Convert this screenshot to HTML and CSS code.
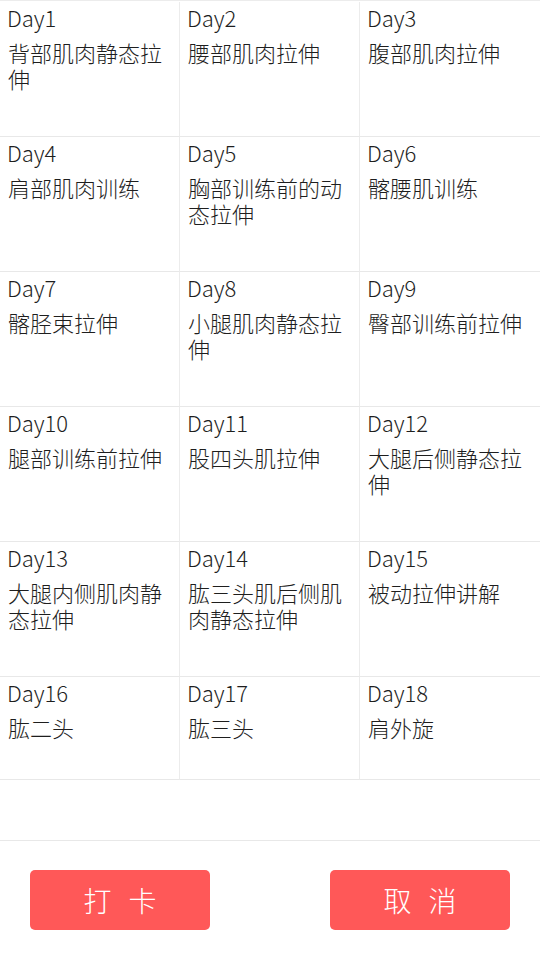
FILE: index.html
```html
<!DOCTYPE html>
<html lang="zh-CN">
<head>
<meta charset="utf-8">
<title>拉伸计划</title>
<link rel="stylesheet" href="styles.css">
</head>
<body>
<div class="grid">
  <div class="cell"><div class="day">Day1</div><div class="name">背部肌肉静态拉伸</div></div>
  <div class="cell"><div class="day">Day2</div><div class="name">腰部肌肉拉伸</div></div>
  <div class="cell"><div class="day">Day3</div><div class="name">腹部肌肉拉伸</div></div>
  <div class="cell"><div class="day">Day4</div><div class="name">肩部肌肉训练</div></div>
  <div class="cell"><div class="day">Day5</div><div class="name">胸部训练前的动态拉伸</div></div>
  <div class="cell"><div class="day">Day6</div><div class="name">髂腰肌训练</div></div>
  <div class="cell"><div class="day">Day7</div><div class="name">髂胫束拉伸</div></div>
  <div class="cell"><div class="day">Day8</div><div class="name">小腿肌肉静态拉伸</div></div>
  <div class="cell"><div class="day">Day9</div><div class="name">臀部训练前拉伸</div></div>
  <div class="cell"><div class="day">Day10</div><div class="name">腿部训练前拉伸</div></div>
  <div class="cell"><div class="day">Day11</div><div class="name">股四头肌拉伸</div></div>
  <div class="cell"><div class="day">Day12</div><div class="name">大腿后侧静态拉伸</div></div>
  <div class="cell"><div class="day">Day13</div><div class="name">大腿内侧肌肉静态拉伸</div></div>
  <div class="cell"><div class="day">Day14</div><div class="name">肱三头肌后侧肌肉静态拉伸</div></div>
  <div class="cell"><div class="day">Day15</div><div class="name">被动拉伸讲解</div></div>
  <div class="cell"><div class="day">Day16</div><div class="name">肱二头</div></div>
  <div class="cell"><div class="day">Day17</div><div class="name">肱三头</div></div>
  <div class="cell"><div class="day">Day18</div><div class="name">肩外旋</div></div>
</div>
<div class="spacer"></div>
<div class="footer">
  <button class="btn"><span>打</span><span>卡</span></button>
  <button class="btn"><span>取</span><span>消</span></button>
</div>
</body>
</html>
```
FILE: styles.css
```css
html, body {
  margin: 0;
  padding: 0;
  background: #ffffff;
}
body {
  width: 540px;
  height: 960px;
  overflow: hidden;
  font-family: "Noto Sans CJK SC", "Noto Sans", sans-serif;
  font-weight: 300;
  color: #1e1e1e;
}
.grid {
  display: grid;
  grid-template-columns: repeat(3, 180px);
  grid-template-rows: repeat(5, 135px) 103px;
  border-top: 1px solid #ececec;
  padding-top: 1px;
}
.cell {
  box-sizing: border-box;
  border-right: 1px solid #ececec;
  border-bottom: 1px solid #e8e8e8;
  padding: 0 8px 0 8px;
  overflow: hidden;
}
.cell:nth-child(3n) {
  border-right: none;
}
.day {
  font-size: 22px;
  line-height: 30px;
  padding-left: 0;
  margin-left: -1px;
}
.name {
  margin-top: 7px;
  font-size: 22px;
  line-height: 26px;
  padding-right: 8px;
}
.spacer {
  height: 60px;
  border-bottom: 1px solid #e8e8e8;
}
.footer {
  display: flex;
  justify-content: space-between;
  padding: 29px 30px 0 30px;
}
.btn {
  width: 180px;
  height: 60px;
  border: none;
  border-radius: 5px;
  background: #ff5858;
  color: #ffffff;
  font-family: "Noto Sans CJK SC", sans-serif;
  font-weight: 300;
  font-size: 28px;
  display: flex;
  align-items: center;
  justify-content: center;
  gap: 17px;
  padding: 0;
}
```
